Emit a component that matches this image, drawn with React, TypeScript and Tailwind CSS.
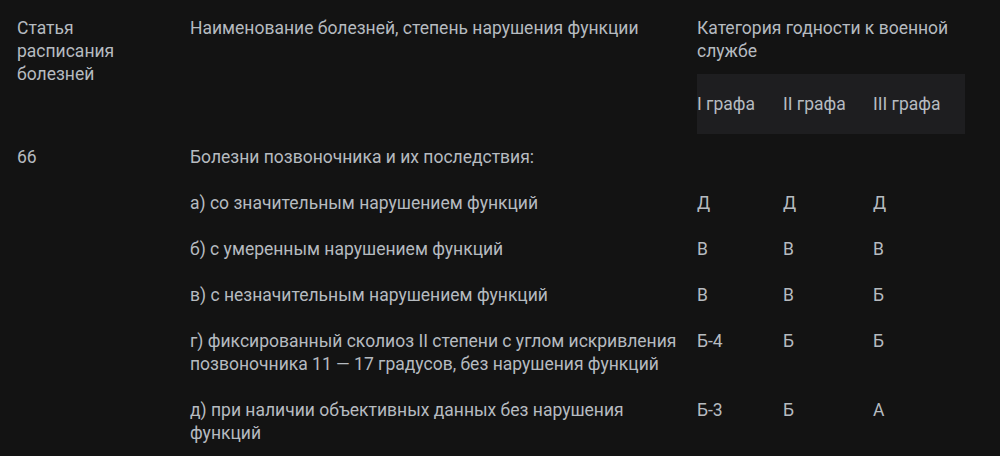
import React from "react";

const rows: { name: string; vals: string[] }[] = [
  { name: "а) со значительным нарушением функций", vals: ["Д", "Д", "Д"] },
  { name: "б) с умеренным нарушением функций", vals: ["В", "В", "В"] },
  { name: "в) с незначительным нарушением функций", vals: ["В", "В", "Б"] },
  {
    name: "г) фиксированный сколиоз II степени с углом искривления позвоночника 11 — 17 градусов, без нарушения функций",
    vals: ["Б-4", "Б", "Б"],
  },
  {
    name: "д) при наличии объективных данных без нарушения функций",
    vals: ["Б-3", "Б", "А"],
  },
];

export default function App() {
  return (
    <div
      className="w-[1000px] h-[456px] bg-[#131313] text-[#b6bbc0] text-[17.5px] leading-[23px] pl-[17px] pt-[17px] overflow-hidden"
      style={{ fontFamily: "Roboto, 'Noto Sans', sans-serif" }}
    >
      <div className="grid grid-cols-[173px_507px_86px_90px_92px]">
        {/* header */}
        <div className="row-span-2 pr-[48px]">Статья расписания болезней</div>
        <div className="row-span-2 pr-[17px]">Наименование болезней, степень нарушения функции</div>
        <div className="col-span-3 pb-[11px]">Категория годности к военной службе</div>
        <div className="col-span-3 grid grid-cols-[86px_90px_92px] bg-[#1e1e20] h-[60px] items-center">
          <div>I графа</div>
          <div>II графа</div>
          <div>III графа</div>
        </div>

        {/* first row */}
        <div className="py-[11.5px]">66</div>
        <div className="py-[11.5px] pr-[17px]">Болезни позвоночника и их последствия:</div>
        <div className="py-[11.5px]"></div>
        <div className="py-[11.5px]"></div>
        <div className="py-[11.5px]"></div>

        {rows.map((r, i) => (
          <React.Fragment key={i}>
            <div className="py-[11.5px]"></div>
            <div className="py-[11.5px] pr-[17px]">{r.name}</div>
            {r.vals.map((v, j) => (
              <div key={j} className="py-[11.5px]">
                {v}
              </div>
            ))}
          </React.Fragment>
        ))}
      </div>
    </div>
  );
}
